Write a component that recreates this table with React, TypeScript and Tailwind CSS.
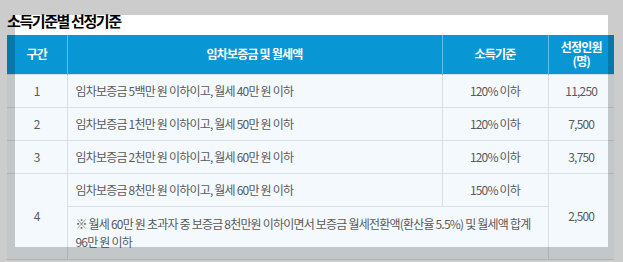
import React from 'react';

const rows = [
  { no: '1', cond: '임차보증금 5백만 원 이하이고, 월세 40만 원 이하', income: '120% 이하', count: '11,250' },
  { no: '2', cond: '임차보증금 1천만 원 이하이고, 월세 50만 원 이하', income: '120% 이하', count: '7,500' },
  { no: '3', cond: '임차보증금 2천만 원 이하이고, 월세 60만 원 이하', income: '120% 이하', count: '3,750' },
];

const font = "font-['Noto_Sans_CJK_KR','Noto_Sans',sans-serif]";
const td = 'border border-[#dcdfe2] text-[12px] tracking-[-0.8px] text-[#5a5a5a] leading-[18px]';

export default function App() {
  return (
    <div className={`relative w-[623px] h-[262px] overflow-hidden bg-white ${font}`}>
      <div className="pl-[7px] pt-[10px]">
        <h3 className="text-[15px] font-bold tracking-[-1.4px] leading-[22px] text-black">소득기준별 선정기준</h3>
        <table className="mt-[3px] w-[607px] table-fixed border-collapse">
          <colgroup>
            <col className="w-[60px]" />
            <col className="w-[375px]" />
            <col className="w-[106px]" />
            <col className="w-[66px]" />
          </colgroup>
          <thead>
            <tr className="h-[39px] bg-[#0996d4] text-white text-[12px] font-bold tracking-[-0.8px] leading-[14px]">
              <th className="border-r border-[#5ebde9]">구간</th>
              <th className="border-r border-[#5ebde9]">임차보증금 및 월세액</th>
              <th className="border-r border-[#5ebde9]">소득기준</th>
              <th className="leading-[14px]">
                <div>선정인원</div>
                <div>(명)</div>
              </th>
            </tr>
          </thead>
          <tbody className="bg-[#f3f9fd]">
            {rows.map((r) => (
              <tr key={r.no} className="h-[33px]">
                <td className={`${td} border-l-0 text-center`}>{r.no}</td>
                <td className={`${td} px-[8px]`}>{r.cond}</td>
                <td className={`${td} text-center`}>{r.income}</td>
                <td className={`${td} border-r-0 text-center`}>{r.count}</td>
              </tr>
            ))}
            <tr className="h-[33px]">
              <td rowSpan={2} className={`${td} border-l-0 text-center`}>4</td>
              <td className={`${td} px-[8px]`}>임차보증금 8천만 원 이하이고, 월세 60만 원 이하</td>
              <td className={`${td} text-center`}>150% 이하</td>
              <td rowSpan={2} className={`${td} border-r-0 text-center`}>2,500</td>
            </tr>
            <tr className="h-[52px]">
              <td colSpan={2} className={`${td} px-[8px] pt-[8px] pb-[8px] align-top`}>
                ※ 월세 60만 원 초과자 중 보증금 8천만원 이하이면서 보증금 월세전환액(환산율 5.5%) 및 월세액 합계 96만 원 이하
              </td>
            </tr>
          </tbody>
        </table>
      </div>
      {/* highlight frame over the page */}
      <div className="pointer-events-none absolute left-[15px] top-[15px] w-[593px] h-[232px] shadow-[0_0_0_9999px_rgba(0,0,0,0.2)]" />
    </div>
  );
}
